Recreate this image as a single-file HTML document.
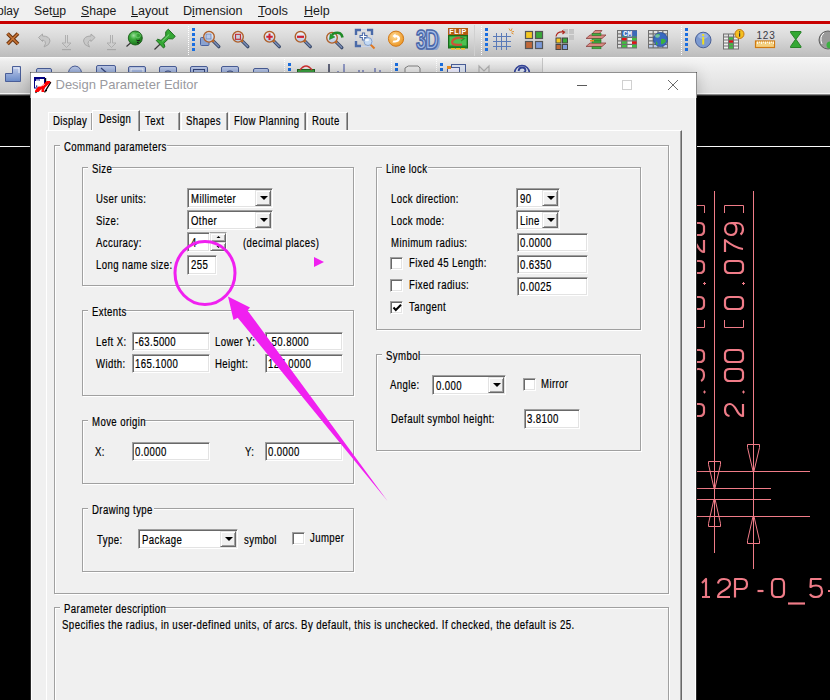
<!DOCTYPE html><html><head><meta charset="utf-8"><style>
html,body{margin:0;padding:0}
body{width:830px;height:700px;overflow:hidden;position:relative;background:#000;font-family:"Liberation Sans",sans-serif}
.a{position:absolute}
.t{position:absolute;white-space:nowrap;line-height:1}
.s{-webkit-text-stroke:0.2px currentColor}
.d{-webkit-text-stroke:0.2px #000}
.grp{position:absolute;border:1px solid #a0a0a0;box-shadow:1px 1px 0 #fff, inset 1px 1px 0 #fff;box-sizing:border-box}
.edit{position:absolute;box-sizing:border-box;background:#fff;border-top:1px solid #a0a0a0;border-left:1px solid #a0a0a0;border-right:1px solid #fff;border-bottom:1px solid #fff;box-shadow:inset 1px 1px 0 #696969, inset -1px -1px 0 #e3e3e3}
.btn{position:absolute;box-sizing:border-box;background:#f0f0f0;border-top:1px solid #e3e3e3;border-left:1px solid #e3e3e3;border-right:1px solid #696969;border-bottom:1px solid #696969;box-shadow:inset 1px 1px 0 #fff, inset -1px -1px 0 #a0a0a0}
.arr{position:absolute;left:4px;top:50%;margin-top:-2px;width:0;height:0;border-left:4px solid transparent;border-right:4px solid transparent;border-top:4px solid #000}
.chk{position:absolute;width:13px;height:13px;box-sizing:border-box;background:#fff;border-top:1px solid #a0a0a0;border-left:1px solid #a0a0a0;border-right:1px solid #fff;border-bottom:1px solid #fff;box-shadow:inset 1px 1px 0 #696969, inset -1px -1px 0 #e3e3e3}
.lbl{position:absolute;background:#f0f0f0;white-space:nowrap;line-height:1;font-size:11px;padding:0 2px 0 2px}
</style></head><body>

<div class="a" style="left:0;top:0;width:830px;height:21px;background:#f0f0f0"></div>
<div class="t" style="left:-3px;top:5px;font-size:12px;color:#1a1a1a;">play</div>
<div class="t" style="left:34px;top:5px;font-size:12px;color:#1a1a1a;transform:scaleX(1.02);transform-origin:0 0;">Set<u>u</u>p</div>
<div class="t" style="left:80.5px;top:5px;font-size:12px;color:#1a1a1a;transform:scaleX(1.02);transform-origin:0 0;"><u>S</u>hape</div>
<div class="t" style="left:130.5px;top:5px;font-size:12px;color:#1a1a1a;transform:scaleX(1.04);transform-origin:0 0;"><u>L</u>ayout</div>
<div class="t" style="left:183px;top:5px;font-size:12px;color:#1a1a1a;transform:scaleX(1.05);transform-origin:0 0;">D<u>i</u>mension</div>
<div class="t" style="left:257.5px;top:5px;font-size:12px;color:#1a1a1a;transform:scaleX(1.07);transform-origin:0 0;"><u>T</u>ools</div>
<div class="t" style="left:303.5px;top:5px;font-size:12px;color:#1a1a1a;transform:scaleX(1.04);transform-origin:0 0;"><u>H</u>elp</div>
<div class="a" style="left:0;top:21px;width:830px;height:3px;background:#c80000"></div>
<div class="a" style="left:0;top:24px;width:830px;height:33px;background:linear-gradient(#e9e9e9,#dadada 40%,#bcbcbc)"></div>
<div class="a" style="left:0;top:57px;width:830px;height:36px;background:linear-gradient(#f4f4f4,#dedede);border-top:1px solid #fafafa;box-sizing:border-box"></div>
<div class="a" style="left:542px;top:58px;width:1px;height:35px;background:#c6c6c6"></div>
<div class="a" style="left:0;top:57px;width:542px;height:36px;background:linear-gradient(#f4f4f4,#ececec 10%,#c4c4c4);border-top:1px solid #fafafa;box-sizing:border-box"></div>
<div class="a" style="left:0;top:93px;width:830px;height:1px;background:#f4f4f4"></div>
<div class="a" style="left:0;top:94px;width:830px;height:1px;background:#8a8a8a"></div>
<div class="a" style="left:0;top:95px;width:830px;height:1px;background:#303030"></div>
<svg class="a" style="left:0;top:0" width="830" height="96" viewBox="0 0 830 96">
<defs><linearGradient id="lens" x1="0" y1="0" x2="0" y2="1"><stop offset="0" stop-color="#f4f8fc"/><stop offset="1" stop-color="#b4c6e2"/></linearGradient></defs>
<path d="M7.5 33.5 L18 44 M18 33.5 L7.5 44" stroke="#6e3610" stroke-width="3.8"/>
<path d="M7.5 33.5 L18 44 M18 33.5 L7.5 44" stroke="#c87436" stroke-width="1.6"/>
<path d="M38.5 37.5 L42.5 34 L42.5 36 Q49.5 36 50 41 Q50 45 44 47 Q46.5 43 45 41.5 Q44 40 42.5 40 L42.5 41.5 Z" fill="#c8c8c8" stroke="#a8a8a8" stroke-width="1"/>
<path d="M65.5 35 L65.5 43 L62 43 L66.5 47.5 L71 43 L67.5 43 L67.5 35" fill="none" stroke="#aaaaaa" stroke-width="0.9"/>
<rect x="62" y="49" width="9" height="1.2" fill="#a8a8a8"/>
<path d="M110.5 35 L110.5 43 L107 43 L111.5 47.5 L116 43 L112.5 43 L112.5 35" fill="none" stroke="#aaaaaa" stroke-width="0.9"/>
<rect x="107" y="49" width="9" height="1.2" fill="#a8a8a8"/>
<path d="M95 37.5 L91 34 L91 36 Q84 36 83.5 41 Q83.5 45 89.5 47 Q87 43 88.5 41.5 Q89.5 40 91 40 L91 41.5 Z" fill="#c8c8c8" stroke="#a8a8a8" stroke-width="1"/>
<defs><radialGradient id="gb" cx="0.38" cy="0.32" r="0.75"><stop offset="0" stop-color="#9ee09e"/><stop offset="0.35" stop-color="#3cac3c"/><stop offset="1" stop-color="#176a17"/></radialGradient></defs>
<line x1="126.5" y1="46.5" x2="131" y2="42.5" stroke="#333" stroke-width="1.1"/>
<circle cx="135.3" cy="38" r="7" fill="url(#gb)" stroke="#1a5e1a" stroke-width="0.9"/>
<circle cx="138" cy="35.5" r="2.4" fill="none" stroke="#6ccf6c" stroke-width="0.8"/>
<path d="M136.5 40 l1.5 1 l2 -1 M137 42.3 l2 0.8" stroke="#1a1a1a" stroke-width="1"/>
<g transform="translate(154.5,49.5) rotate(-44)">
<line x1="0" y1="0" x2="9" y2="0" stroke="#3a3a3a" stroke-width="1.2"/>
<path d="M7.5 -5.2 L9.5 -5.2 L11 -2 L17.5 -2 L20.5 -5 L24 -5 L24 5 L20.5 5 L17.5 2 L11 2 L9.5 5.2 L7.5 5.2 Z" fill="#34a834" stroke="#1a661a" stroke-width="0.9" stroke-linejoin="round"/>
<line x1="11.5" y1="-0.6" x2="21" y2="-0.6" stroke="#8ede8e" stroke-width="0.9"/>
</g>
<rect x="188" y="26" width="1" height="1" fill="#fff"/>
<rect x="188" y="28" width="1" height="1" fill="#fff"/>
<rect x="188" y="30" width="1" height="1" fill="#fff"/>
<rect x="188" y="32" width="1" height="1" fill="#fff"/>
<rect x="188" y="34" width="1" height="1" fill="#fff"/>
<rect x="188" y="36" width="1" height="1" fill="#fff"/>
<rect x="188" y="38" width="1" height="1" fill="#fff"/>
<rect x="188" y="40" width="1" height="1" fill="#fff"/>
<rect x="188" y="42" width="1" height="1" fill="#fff"/>
<rect x="188" y="44" width="1" height="1" fill="#fff"/>
<rect x="188" y="46" width="1" height="1" fill="#fff"/>
<rect x="188" y="48" width="1" height="1" fill="#fff"/>
<rect x="188" y="50" width="1" height="1" fill="#fff"/>
<rect x="188" y="52" width="1" height="1" fill="#fff"/>
<rect x="188" y="54" width="1" height="1" fill="#fff"/>
<rect x="192" y="28" width="3" height="3" fill="#1a6ee0"/>
<rect x="192" y="33" width="3" height="3" fill="#1a6ee0"/>
<rect x="192" y="38" width="3" height="3" fill="#1a6ee0"/>
<rect x="192" y="43" width="3" height="3" fill="#1a6ee0"/>
<rect x="192" y="48" width="3" height="3" fill="#1a6ee0"/>
<rect x="200.5" y="37.5" width="8.5" height="8" rx="1" fill="#8aa2d0" stroke="#4a62a0" stroke-width="1"/>
<g>
<line x1="212.8" y1="40.599999999999994" x2="218.8" y2="46.599999999999994" stroke="#3a4a6a" stroke-width="3.4" stroke-linecap="round"/>
<line x1="213" y1="40.8" x2="218.5" y2="46.3" stroke="#7a8cb4" stroke-width="1.6" stroke-linecap="round"/>
<line x1="212.5" y1="40.3" x2="214" y2="41.8" stroke="#d07020" stroke-width="2.2"/>
<circle cx="209" cy="36.8" r="5.3" fill="url(#lens)" stroke="#b0602a" stroke-width="1.4"/>
<rect x="206" y="34" width="5" height="5" fill="#b8c8e8" stroke="#6a82b8" stroke-width="0.8"/></g>
<g>
<line x1="241.8" y1="40.599999999999994" x2="247.8" y2="46.599999999999994" stroke="#3a4a6a" stroke-width="3.4" stroke-linecap="round"/>
<line x1="242" y1="40.8" x2="247.5" y2="46.3" stroke="#7a8cb4" stroke-width="1.6" stroke-linecap="round"/>
<line x1="241.5" y1="40.3" x2="243" y2="41.8" stroke="#d07020" stroke-width="2.2"/>
<circle cx="238" cy="36.8" r="5.3" fill="url(#lens)" stroke="#b0602a" stroke-width="1.4"/>
<rect x="235.5" y="34.3" width="5" height="5" fill="#c8d0e0" stroke="#c03038" stroke-width="1.2"/></g>
<g>
<line x1="273.3" y1="40.599999999999994" x2="279.3" y2="46.599999999999994" stroke="#3a4a6a" stroke-width="3.4" stroke-linecap="round"/>
<line x1="273.5" y1="40.8" x2="279.0" y2="46.3" stroke="#7a8cb4" stroke-width="1.6" stroke-linecap="round"/>
<line x1="273.0" y1="40.3" x2="274.5" y2="41.8" stroke="#d07020" stroke-width="2.2"/>
<circle cx="269.5" cy="36.8" r="5.3" fill="url(#lens)" stroke="#b0602a" stroke-width="1.4"/>
<path d="M269.5 33.5 V40 M266.3 36.8 H272.7" stroke="#d02030" stroke-width="2"/></g>
<g>
<line x1="304.3" y1="40.599999999999994" x2="310.3" y2="46.599999999999994" stroke="#3a4a6a" stroke-width="3.4" stroke-linecap="round"/>
<line x1="304.5" y1="40.8" x2="310.0" y2="46.3" stroke="#7a8cb4" stroke-width="1.6" stroke-linecap="round"/>
<line x1="304.0" y1="40.3" x2="305.5" y2="41.8" stroke="#d07020" stroke-width="2.2"/>
<circle cx="300.5" cy="36.8" r="5.3" fill="url(#lens)" stroke="#b0602a" stroke-width="1.4"/>
<path d="M297 36.8 H304" stroke="#d02030" stroke-width="2.2"/></g>
<g>
<line x1="335.8" y1="41.599999999999994" x2="341.8" y2="47.599999999999994" stroke="#3a4a6a" stroke-width="3.4" stroke-linecap="round"/>
<line x1="336" y1="41.8" x2="341.5" y2="47.3" stroke="#7a8cb4" stroke-width="1.6" stroke-linecap="round"/>
<line x1="335.5" y1="41.3" x2="337" y2="42.8" stroke="#d07020" stroke-width="2.2"/>
<circle cx="332" cy="37.8" r="5.3" fill="url(#lens)" stroke="#b0602a" stroke-width="1.4"/>
<path d="M342.5 37.5 Q341.5 31.5 335 33 Q333 33.5 332 35" stroke="#1f8a26" stroke-width="2.6" fill="none"/><path d="M329.5 39.5 L330.2 34 L334.8 37 Z" fill="#22a02a" stroke="#1a7a20" stroke-width="0.6"/></g>
<rect x="355.5" y="29.5" width="17" height="17" fill="none" stroke="#c8d4ea" stroke-width="1"/>
<path d="M356 35 V30 H361 M367 30 H372 V35 M356 41 V46 H361" stroke="#4a6aa8" stroke-width="2.4" fill="none"/>
<path d="M363.5 32.5 V40.5 M359.5 36.5 H367.5" stroke="#4a6aa8" stroke-width="3.2"/><path d="M363.5 33.5 V39.5 M360.5 36.5 H366.5" stroke="#fff" stroke-width="1.2"/>
<line x1="370.5" y1="44.5" x2="374.5" y2="48.5" stroke="#e07820" stroke-width="2"/>
<circle cx="368" cy="41.5" r="4" fill="#c4daf4" stroke="#7a9ac8" stroke-width="0.9"/>
<ellipse cx="367" cy="40" rx="2" ry="1.3" fill="#fff" opacity="0.8"/>
<defs><radialGradient id="og" cx="0.4" cy="0.35" r="0.7"><stop offset="0" stop-color="#ffd890"/><stop offset="1" stop-color="#eb9420"/></radialGradient></defs>
<circle cx="396" cy="38.7" r="7.6" fill="url(#og)" stroke="#d07818" stroke-width="1"/>
<path d="M392.5 36 L395.5 33.5 L395.5 35 Q400 35 400 38.5 Q400 42 395 42.5 L392.5 42.5 L393.5 40.5 L395 40.5 Q397.5 40.5 397.5 38.5 Q397.5 37 395.5 37 L395.5 38.5 Z" fill="#fff"/>
<path d="M419 50 L437 50 Q441 46 440 38 Q439 33 436 31 L436 45 Z" fill="#7d9ad0" opacity="0.75"/>
<text x="0" y="0" font-family="Liberation Sans" font-weight="bold" font-size="28" fill="#a4bce8" stroke="#4a68a8" stroke-width="1.8" stroke-linejoin="round" transform="translate(416,48.5) scale(0.66,0.97)" letter-spacing="-1.5">3D</text>
<rect x="448" y="28" width="20" height="7" fill="#b35c12"/>
<text x="0" y="0" font-family="Liberation Sans" font-weight="bold" font-size="7.2" fill="#fff" transform="translate(449.3,34.2) scale(1,0.95)" letter-spacing="0.5">FLIP</text>
<rect x="448.5" y="35.5" width="19" height="12.5" fill="#1e8a28" stroke="#1a6a1a" stroke-width="1"/>
<rect x="449.5" y="36.5" width="17" height="9" fill="#4cc050"/>
<path d="M463.5 38.5 Q458 36.5 453.5 39.5 Q451 42 453 44 Q456 45.5 462 44.5" stroke="#d05038" stroke-width="2.2" fill="none"/>
<path d="M460 37 L464.5 38.5 L461 41" stroke="#2a9a2a" stroke-width="1.2" fill="none"/>
<rect x="451" y="48" width="4" height="1.6" fill="#f0c020"/>
<rect x="456" y="48" width="4" height="1.6" fill="#f0c020"/>
<rect x="461" y="48" width="4" height="1.6" fill="#f0c020"/>
<rect x="474" y="25" width="1" height="31" fill="#d0d0d0"/>
<rect x="481" y="26" width="1" height="1" fill="#fff"/>
<rect x="481" y="28" width="1" height="1" fill="#fff"/>
<rect x="481" y="30" width="1" height="1" fill="#fff"/>
<rect x="481" y="32" width="1" height="1" fill="#fff"/>
<rect x="481" y="34" width="1" height="1" fill="#fff"/>
<rect x="481" y="36" width="1" height="1" fill="#fff"/>
<rect x="481" y="38" width="1" height="1" fill="#fff"/>
<rect x="481" y="40" width="1" height="1" fill="#fff"/>
<rect x="481" y="42" width="1" height="1" fill="#fff"/>
<rect x="481" y="44" width="1" height="1" fill="#fff"/>
<rect x="481" y="46" width="1" height="1" fill="#fff"/>
<rect x="481" y="48" width="1" height="1" fill="#fff"/>
<rect x="481" y="50" width="1" height="1" fill="#fff"/>
<rect x="481" y="52" width="1" height="1" fill="#fff"/>
<rect x="481" y="54" width="1" height="1" fill="#fff"/>
<rect x="485" y="28" width="3" height="3" fill="#1a6ee0"/>
<rect x="485" y="33" width="3" height="3" fill="#1a6ee0"/>
<rect x="485" y="38" width="3" height="3" fill="#1a6ee0"/>
<rect x="485" y="43" width="3" height="3" fill="#1a6ee0"/>
<rect x="485" y="48" width="3" height="3" fill="#1a6ee0"/>
<line x1="496.5" y1="33" x2="496.5" y2="50" stroke="#5a7ab8" stroke-width="1"/>
<line x1="501.5" y1="33" x2="501.5" y2="50" stroke="#5a7ab8" stroke-width="1"/>
<line x1="506.5" y1="33" x2="506.5" y2="50" stroke="#5a7ab8" stroke-width="1"/>
<line x1="493" y1="36.5" x2="511" y2="36.5" stroke="#5a7ab8" stroke-width="1"/>
<line x1="493" y1="41.5" x2="511" y2="41.5" stroke="#5a7ab8" stroke-width="1"/>
<line x1="493" y1="46.5" x2="511" y2="46.5" stroke="#5a7ab8" stroke-width="1"/>
<path d="M509 28.5 L510.5 31 M512 28.5 L511 31 M514 31.5 L511.5 32 M513.5 34 L511.5 33" stroke="#e08a20" stroke-width="0.9"/>
<rect x="525.5" y="31.5" width="7" height="7" fill="#f4c820" stroke="#555" stroke-width="1.2"/>
<rect x="535.5" y="31.5" width="7" height="7" fill="#3aa83a" stroke="#555" stroke-width="1.2"/>
<rect x="525.5" y="41.5" width="7" height="7" fill="#c06838" stroke="#555" stroke-width="1.2"/>
<rect x="535.5" y="41.5" width="7" height="7" fill="#7a9ad8" stroke="#555" stroke-width="1.2"/>
<rect x="563" y="29" width="5" height="5" fill="#c4c4c4"/>
<rect x="569" y="29" width="5" height="5" fill="#c4c4c4"/>
<rect x="569" y="35" width="5" height="5" fill="#c4c4c4"/>
<rect x="556" y="38" width="5" height="5" fill="#f4c820" stroke="#444" stroke-width="1"/>
<rect x="562.5" y="38" width="5" height="5" fill="#3aa83a" stroke="#444" stroke-width="1"/>
<rect x="556" y="44.5" width="5" height="5" fill="#c06838" stroke="#444" stroke-width="1"/>
<rect x="562.5" y="44.5" width="5" height="5" fill="#7a9ad8" stroke="#444" stroke-width="1"/>
<path d="M556 36.5 Q557 31 564 32 M562 30.5 L564.5 32 L562.5 34" stroke="#b02a20" stroke-width="1.2" fill="none"/>
<path d="M595 30.5 L602 30.5 L599 34 L592 34 Z" fill="#d88a80" stroke="#8a4040" stroke-width="0.8"/>
<path d="M590 35 L606 35 L602 38.5 L586 38.5 Z" fill="#d88a80" stroke="#8a4040" stroke-width="0.8"/>
<path d="M590 43 L606 43 L602 46.5 L586 46.5 Z" fill="#d88a80" stroke="#8a4040" stroke-width="0.8"/>
<rect x="592" y="33.5" width="9" height="2" fill="#44b044" stroke="#1e6a1e" stroke-width="0.5"/>
<rect x="592" y="38.8" width="9" height="2" fill="#44b044" stroke="#1e6a1e" stroke-width="0.5"/>
<rect x="592" y="41" width="9" height="2" fill="#44b044" stroke="#1e6a1e" stroke-width="0.5"/>
<rect x="592" y="46.8" width="9" height="2" fill="#44b044" stroke="#1e6a1e" stroke-width="0.5"/>
<rect x="590" y="40" width="4" height="1.5" fill="#f09020"/>
<rect x="617" y="30" width="20" height="18.5" fill="#707070"/>
<rect x="618" y="31.0" width="3" height="2.3" fill="#ddd"/>
<rect x="618" y="34.5" width="3" height="2.3" fill="#ddd"/>
<rect x="622" y="34.5" width="4.5" height="2.3" fill="#3ec03e"/>
<rect x="627.5" y="34.5" width="4.5" height="2.3" fill="#eee"/>
<rect x="632" y="34.5" width="4.5" height="2.3" fill="#3ec03e"/>
<rect x="618" y="38.0" width="3" height="2.3" fill="#ddd"/>
<rect x="622" y="38.0" width="4.5" height="2.3" fill="#e81010"/>
<rect x="627.5" y="38.0" width="4.5" height="2.3" fill="#eee"/>
<rect x="632" y="38.0" width="4.5" height="2.3" fill="#3ec03e"/>
<rect x="618" y="41.5" width="3" height="2.3" fill="#ddd"/>
<rect x="622" y="41.5" width="4.5" height="2.3" fill="#3ec03e"/>
<rect x="627.5" y="41.5" width="4.5" height="2.3" fill="#eee"/>
<rect x="632" y="41.5" width="4.5" height="2.3" fill="#e81010"/>
<rect x="618" y="45.0" width="3" height="2.3" fill="#ddd"/>
<rect x="622" y="45.0" width="4.5" height="2.3" fill="#3ec03e"/>
<rect x="627.5" y="45.0" width="4.5" height="2.3" fill="#eee"/>
<rect x="632" y="45.0" width="4.5" height="2.3" fill="#3ec03e"/>
<rect x="622" y="30.5" width="15" height="6" fill="#3a6ab8"/>
<text x="623" y="36.2" font-family="Liberation Mono" font-weight="bold" font-size="7.5" fill="#fff">CM</text>
<rect x="648" y="30" width="20" height="18.5" fill="#707070"/>
<rect x="649.0" y="31.0" width="3.6" height="2.3" fill="#e0e0e0"/>
<rect x="653.8" y="31.0" width="3.6" height="2.3" fill="#e0e0e0"/>
<rect x="658.6" y="31.0" width="3.6" height="2.3" fill="#e0e0e0"/>
<rect x="663.4" y="31.0" width="3.6" height="2.3" fill="#e0e0e0"/>
<rect x="649.0" y="34.5" width="3.6" height="2.3" fill="#e0e0e0"/>
<rect x="653.8" y="34.5" width="3.6" height="2.3" fill="#e0e0e0"/>
<rect x="658.6" y="34.5" width="3.6" height="2.3" fill="#e0e0e0"/>
<rect x="663.4" y="34.5" width="3.6" height="2.3" fill="#e0e0e0"/>
<rect x="649.0" y="38.0" width="3.6" height="2.3" fill="#e0e0e0"/>
<rect x="653.8" y="38.0" width="3.6" height="2.3" fill="#e0e0e0"/>
<rect x="658.6" y="38.0" width="3.6" height="2.3" fill="#e0e0e0"/>
<rect x="663.4" y="38.0" width="3.6" height="2.3" fill="#e0e0e0"/>
<rect x="649.0" y="41.5" width="3.6" height="2.3" fill="#e0e0e0"/>
<rect x="653.8" y="41.5" width="3.6" height="2.3" fill="#e0e0e0"/>
<rect x="658.6" y="41.5" width="3.6" height="2.3" fill="#e0e0e0"/>
<rect x="663.4" y="41.5" width="3.6" height="2.3" fill="#e0e0e0"/>
<rect x="649.0" y="45.0" width="3.6" height="2.3" fill="#b8c8e8"/>
<rect x="653.8" y="45.0" width="3.6" height="2.3" fill="#b8c8e8"/>
<rect x="658.6" y="45.0" width="3.6" height="2.3" fill="#b8c8e8"/>
<rect x="663.4" y="45.0" width="3.6" height="2.3" fill="#b8c8e8"/>
<circle cx="660.5" cy="39.5" r="7" fill="#3a6ac0" stroke="#2a4a90" stroke-width="0.8"/>
<path d="M655 36 Q657 33 660 34 L659 37 Q656 39 655 36 Z M661 39 Q665 38 666 41 Q664 45 661 44 Z M656 41 L658 44 L656 45 Z" fill="#3ab040"/>
<ellipse cx="657.5" cy="36" rx="2.5" ry="1.8" fill="#b0d0ff" opacity="0.5"/>
<rect x="681" y="26" width="1" height="1" fill="#fff"/>
<rect x="681" y="28" width="1" height="1" fill="#fff"/>
<rect x="681" y="30" width="1" height="1" fill="#fff"/>
<rect x="681" y="32" width="1" height="1" fill="#fff"/>
<rect x="681" y="34" width="1" height="1" fill="#fff"/>
<rect x="681" y="36" width="1" height="1" fill="#fff"/>
<rect x="681" y="38" width="1" height="1" fill="#fff"/>
<rect x="681" y="40" width="1" height="1" fill="#fff"/>
<rect x="681" y="42" width="1" height="1" fill="#fff"/>
<rect x="681" y="44" width="1" height="1" fill="#fff"/>
<rect x="681" y="46" width="1" height="1" fill="#fff"/>
<rect x="681" y="48" width="1" height="1" fill="#fff"/>
<rect x="681" y="50" width="1" height="1" fill="#fff"/>
<rect x="681" y="52" width="1" height="1" fill="#fff"/>
<rect x="681" y="54" width="1" height="1" fill="#fff"/>
<rect x="685" y="28" width="3" height="3" fill="#1a6ee0"/>
<rect x="685" y="33" width="3" height="3" fill="#1a6ee0"/>
<rect x="685" y="38" width="3" height="3" fill="#1a6ee0"/>
<rect x="685" y="43" width="3" height="3" fill="#1a6ee0"/>
<rect x="685" y="48" width="3" height="3" fill="#1a6ee0"/>
<circle cx="703.2" cy="40" r="7.8" fill="#7c9ad0" stroke="#4a6096" stroke-width="1"/>
<ellipse cx="703" cy="36" rx="5" ry="3" fill="#b0c4ea" opacity="0.6"/>
<rect x="702.2" y="34" width="2" height="2" fill="#f2e020"/><rect x="702.2" y="37" width="2" height="7.5" fill="#f2e020"/>
<rect x="723" y="33.5" width="16" height="16" fill="#707070"/>
<rect x="724" y="34.5" width="4" height="2" fill="#ddd"/>
<rect x="729" y="34.5" width="4" height="2" fill="#ddd"/>
<rect x="734" y="34.5" width="4" height="2" fill="#ddd"/>
<rect x="724" y="37.5" width="4" height="2" fill="#eee"/>
<rect x="729" y="37.5" width="4" height="2" fill="#3ec03e"/>
<rect x="734" y="37.5" width="4" height="2" fill="#eee"/>
<rect x="724" y="40.5" width="4" height="2" fill="#eee"/>
<rect x="729" y="40.5" width="4" height="2" fill="#e81010"/>
<rect x="734" y="40.5" width="4" height="2" fill="#eee"/>
<rect x="724" y="43.5" width="4" height="2" fill="#eee"/>
<rect x="729" y="43.5" width="4" height="2" fill="#3ec03e"/>
<rect x="734" y="43.5" width="4" height="2" fill="#eee"/>
<rect x="724" y="46.5" width="4" height="2" fill="#eee"/>
<rect x="729" y="46.5" width="4" height="2" fill="#3ec03e"/>
<rect x="734" y="46.5" width="4" height="2" fill="#eee"/>
<circle cx="739.5" cy="34" r="4.5" fill="#f4c020" stroke="#c87810" stroke-width="1"/>
<rect x="739" y="31.3" width="1.2" height="1.2" fill="#333"/><rect x="739" y="33.2" width="1.2" height="3.5" fill="#333"/>
<text x="756.5" y="38.8" font-family="Liberation Sans" font-size="10" fill="#383844" letter-spacing="0.8">123</text>
<rect x="755.5" y="41" width="19" height="6.5" fill="#f4d080" stroke="#d07a10" stroke-width="1.2"/>
<line x1="757.5" y1="41.5" x2="757.5" y2="44" stroke="#fff" stroke-width="0.8"/>
<line x1="759.5" y1="41.5" x2="759.5" y2="43" stroke="#fff" stroke-width="0.8"/>
<line x1="761.5" y1="41.5" x2="761.5" y2="44" stroke="#fff" stroke-width="0.8"/>
<line x1="763.5" y1="41.5" x2="763.5" y2="43" stroke="#fff" stroke-width="0.8"/>
<line x1="765.5" y1="41.5" x2="765.5" y2="44" stroke="#fff" stroke-width="0.8"/>
<line x1="767.5" y1="41.5" x2="767.5" y2="43" stroke="#fff" stroke-width="0.8"/>
<line x1="769.5" y1="41.5" x2="769.5" y2="44" stroke="#fff" stroke-width="0.8"/>
<line x1="771.5" y1="41.5" x2="771.5" y2="43" stroke="#fff" stroke-width="0.8"/>
<line x1="773.5" y1="41.5" x2="773.5" y2="44" stroke="#fff" stroke-width="0.8"/>
<path d="M790.5 31.5 L801 31.5 L801 32.5 L796 39.3 L801 46.5 L801 47.5 L790.5 47.5 L790.5 46.5 L795.5 39.3 L790.5 32.5 Z" fill="#34a834" stroke="#1e7a1e" stroke-width="0.9"/>
<circle cx="828" cy="40" r="9" fill="#9a9a9a" stroke="#606060" stroke-width="1"/>
<path d="M822 44 Q819 37 824 33" stroke="#fff" stroke-width="1" fill="none"/>
<circle cx="830" cy="45" r="3.5" fill="#3ab040"/>
<defs><linearGradient id="bg" x1="0" y1="0" x2="0" y2="1"><stop offset="0" stop-color="#c0ccea"/><stop offset="1" stop-color="#6a8ac8"/></linearGradient></defs>
<path d="M5.5 73.5 H12.5 V66.5 H20.5 V81.5 H5.5 Z" fill="url(#bg)" stroke="#4a5e98" stroke-width="1"/>
<path d="M13.5 68 H19 V73" stroke="#fff" stroke-width="0.8" fill="none"/>
<rect x="36.5" y="68.5" width="15" height="12" rx="1.5" fill="url(#bg)" stroke="#4a5e98" stroke-width="1"/>
<path d="M67.5 80 Q67.5 66 75 66 Q82.5 66 82.5 80 Z" fill="url(#bg)" stroke="#4a5e98" stroke-width="1"/>
<rect x="96.5" y="65.5" width="19" height="15" rx="1.5" fill="url(#bg)" stroke="#4a5e98" stroke-width="1"/><path d="M101 68 L108 74" stroke="#34447a" stroke-width="1.2"/>
<rect x="128.5" y="66.5" width="17" height="14" rx="1.5" fill="url(#bg)" stroke="#4a5e98" stroke-width="1"/><rect x="131" y="69" width="12" height="10" fill="none" stroke="#fff" stroke-width="0.8"/>
<rect x="159.5" y="66.5" width="17" height="14" rx="1.5" fill="url(#bg)" stroke="#4a5e98" stroke-width="1"/><circle cx="168" cy="76" r="5" fill="none" stroke="#34447a" stroke-width="1"/>
<rect x="190.5" y="66.5" width="17" height="14" rx="1.5" fill="url(#bg)" stroke="#4a5e98" stroke-width="1"/><rect x="193.5" y="69.5" width="11" height="10" fill="none" stroke="#34447a" stroke-width="1"/>
<rect x="221.5" y="66.5" width="17" height="14" rx="1.5" fill="url(#bg)" stroke="#4a5e98" stroke-width="1"/><circle cx="230" cy="76" r="5" fill="none" stroke="#34447a" stroke-width="1"/>
<rect x="253.5" y="68.5" width="15" height="12" rx="1.5" fill="url(#bg)" stroke="#4a5e98" stroke-width="1"/>
<rect x="284" y="59" width="1" height="1" fill="#fff"/>
<rect x="284" y="61" width="1" height="1" fill="#fff"/>
<rect x="284" y="63" width="1" height="1" fill="#fff"/>
<rect x="284" y="65" width="1" height="1" fill="#fff"/>
<rect x="284" y="67" width="1" height="1" fill="#fff"/>
<rect x="284" y="69" width="1" height="1" fill="#fff"/>
<rect x="284" y="71" width="1" height="1" fill="#fff"/>
<rect x="284" y="73" width="1" height="1" fill="#fff"/>
<rect x="284" y="75" width="1" height="1" fill="#fff"/>
<rect x="284" y="77" width="1" height="1" fill="#fff"/>
<rect x="284" y="79" width="1" height="1" fill="#fff"/>
<rect x="284" y="81" width="1" height="1" fill="#fff"/>
<rect x="284" y="83" width="1" height="1" fill="#fff"/>
<rect x="284" y="85" width="1" height="1" fill="#fff"/>
<rect x="284" y="87" width="1" height="1" fill="#fff"/>
<rect x="284" y="89" width="1" height="1" fill="#fff"/>
<rect x="284" y="91" width="1" height="1" fill="#fff"/>
<rect x="288" y="63" width="3" height="3" fill="#1a6ee0"/>
<rect x="288" y="68" width="3" height="3" fill="#1a6ee0"/>
<rect x="297.5" y="69.5" width="17" height="6" fill="#3aa040" stroke="#206820" stroke-width="1"/>
<path d="M300 70 Q306 62 312 70" stroke="#d03030" stroke-width="1.5" fill="none"/>
<path d="M329 64 V73 M344 64 V73 M338 71 V73 M359 70 V73 M363 70 V73 M375 68 V73 M380 70 V73" stroke="#3a4aa0" stroke-width="1"/>
<path d="M329 64 V73" stroke="#333" stroke-width="1"/>
<rect x="391" y="59" width="1" height="1" fill="#fff"/>
<rect x="391" y="61" width="1" height="1" fill="#fff"/>
<rect x="391" y="63" width="1" height="1" fill="#fff"/>
<rect x="391" y="65" width="1" height="1" fill="#fff"/>
<rect x="391" y="67" width="1" height="1" fill="#fff"/>
<rect x="391" y="69" width="1" height="1" fill="#fff"/>
<rect x="391" y="71" width="1" height="1" fill="#fff"/>
<rect x="391" y="73" width="1" height="1" fill="#fff"/>
<rect x="391" y="75" width="1" height="1" fill="#fff"/>
<rect x="391" y="77" width="1" height="1" fill="#fff"/>
<rect x="391" y="79" width="1" height="1" fill="#fff"/>
<rect x="391" y="81" width="1" height="1" fill="#fff"/>
<rect x="391" y="83" width="1" height="1" fill="#fff"/>
<rect x="391" y="85" width="1" height="1" fill="#fff"/>
<rect x="391" y="87" width="1" height="1" fill="#fff"/>
<rect x="391" y="89" width="1" height="1" fill="#fff"/>
<rect x="391" y="91" width="1" height="1" fill="#fff"/>
<rect x="395" y="63" width="3" height="3" fill="#1a6ee0"/>
<rect x="395" y="68" width="3" height="3" fill="#1a6ee0"/>
<path d="M405 73 L405 68 Q408 65 412 66 L418 66 L420 68 L420 73 Z" fill="#e8e8e8" stroke="#808080" stroke-width="1"/>
<rect x="436" y="59" width="1" height="1" fill="#fff"/>
<rect x="436" y="61" width="1" height="1" fill="#fff"/>
<rect x="436" y="63" width="1" height="1" fill="#fff"/>
<rect x="436" y="65" width="1" height="1" fill="#fff"/>
<rect x="436" y="67" width="1" height="1" fill="#fff"/>
<rect x="436" y="69" width="1" height="1" fill="#fff"/>
<rect x="436" y="71" width="1" height="1" fill="#fff"/>
<rect x="436" y="73" width="1" height="1" fill="#fff"/>
<rect x="436" y="75" width="1" height="1" fill="#fff"/>
<rect x="436" y="77" width="1" height="1" fill="#fff"/>
<rect x="436" y="79" width="1" height="1" fill="#fff"/>
<rect x="436" y="81" width="1" height="1" fill="#fff"/>
<rect x="436" y="83" width="1" height="1" fill="#fff"/>
<rect x="436" y="85" width="1" height="1" fill="#fff"/>
<rect x="436" y="87" width="1" height="1" fill="#fff"/>
<rect x="436" y="89" width="1" height="1" fill="#fff"/>
<rect x="436" y="91" width="1" height="1" fill="#fff"/>
<rect x="440" y="63" width="3" height="3" fill="#1a6ee0"/>
<rect x="440" y="68" width="3" height="3" fill="#1a6ee0"/>
<rect x="451.5" y="64.5" width="14" height="9" fill="#dde4f2" stroke="#4a5e98" stroke-width="1"/>
<rect x="447.5" y="67.5" width="12" height="6" fill="#eef" stroke="#4a5e98" stroke-width="1"/>
<rect x="447" y="66" width="4" height="3" fill="#f09020"/>
<path d="M479 66 L484 71 L489 66 V73 H479 Z" fill="none" stroke="#b0b0b0" stroke-width="1.2"/>
<circle cx="522" cy="73" r="7.5" fill="#dfe6f4" stroke="#34449a" stroke-width="1.6"/>
<path d="M518.5 71 Q519 67.5 522 67.5 Q525.5 67.5 525.5 70.5 Q525.5 72 523 73" fill="none" stroke="#34449a" stroke-width="1.8"/>
</svg>
<div class="a" style="left:0;top:96px;width:830px;height:604px;background:#000"></div>
<div class="a" style="left:0;top:146px;width:830px;height:1px;background:#fafafa"></div>
<svg class="a" style="left:0;top:0" width="830" height="700" viewBox="0 0 830 700">
<line x1="714.5" y1="191" x2="714.5" y2="553" stroke="#f07c88" stroke-width="1"/>
<line x1="753.5" y1="191" x2="753.5" y2="569" stroke="#f07c88" stroke-width="1"/>
<line x1="696" y1="471.5" x2="810" y2="471.5" stroke="#f07c88" stroke-width="1"/>
<line x1="696" y1="516.5" x2="810" y2="516.5" stroke="#f07c88" stroke-width="1"/>
<line x1="696" y1="488.5" x2="771" y2="488.5" stroke="#f07c88" stroke-width="1"/>
<line x1="696" y1="499.5" x2="771" y2="499.5" stroke="#f07c88" stroke-width="1"/>
<path d="M708.5 461.5 H720.5 V464.5 L715.0 488 L714.0 488 L708.5 464.5 Z" fill="none" stroke="#f07c88" stroke-width="1"/>
<path d="M708.5 526.5 H720.5 V523.5 L715.0 499 L714.0 499 L708.5 523.5 Z" fill="none" stroke="#f07c88" stroke-width="1"/>
<path d="M747.5 444.5 H759.5 V447.5 L754.0 471 L753.0 471 L747.5 447.5 Z" fill="none" stroke="#f07c88" stroke-width="1"/>
<path d="M747.5 543.5 H759.5 V540.5 L754.0 516.5 L753.0 516.5 L747.5 540.5 Z" fill="none" stroke="#f07c88" stroke-width="1"/>
<path transform="translate(724,417) rotate(-90)" d="M1,5.5 C1.5,2.5 3.5,1 7,1 C10.5,1 13,2.5 13,6 C13,9 10.5,10.5 7,12.5 C3,14.5 1,16 1,19 H13" fill="none" stroke="#f07c88" stroke-width="2.2" stroke-linejoin="round"/>
<path transform="translate(724,393.5) rotate(-90)" d="M0,19.5 H3 M1.5,18 V21" fill="none" stroke="#f07c88" stroke-width="1" stroke-linejoin="round"/>
<path transform="translate(724,382) rotate(-90)" d="M4.5,1 H9.5 Q13,1.5 13,5.5 V14.5 Q13,18.5 9.5,19 H4.5 Q1,18.5 1,14.5 V5.5 Q1,1.5 4.5,1 Z" fill="none" stroke="#f07c88" stroke-width="2.2" stroke-linejoin="round"/>
<path transform="translate(724,363) rotate(-90)" d="M4.5,1 H9.5 Q13,1.5 13,5.5 V14.5 Q13,18.5 9.5,19 H4.5 Q1,18.5 1,14.5 V5.5 Q1,1.5 4.5,1 Z" fill="none" stroke="#f07c88" stroke-width="2.2" stroke-linejoin="round"/>
<path transform="translate(724,328) rotate(-90)" d="M8,0.5 H0.5 V19.5 H8" fill="none" stroke="#f07c88" stroke-width="1" stroke-linejoin="round"/>
<path transform="translate(724,310) rotate(-90)" d="M4.5,1 H9.5 Q13,1.5 13,5.5 V14.5 Q13,18.5 9.5,19 H4.5 Q1,18.5 1,14.5 V5.5 Q1,1.5 4.5,1 Z" fill="none" stroke="#f07c88" stroke-width="2.2" stroke-linejoin="round"/>
<path transform="translate(724,285) rotate(-90)" d="M0,19.5 H3 M1.5,18 V21" fill="none" stroke="#f07c88" stroke-width="1" stroke-linejoin="round"/>
<path transform="translate(724,274) rotate(-90)" d="M4.5,1 H9.5 Q13,1.5 13,5.5 V14.5 Q13,18.5 9.5,19 H4.5 Q1,18.5 1,14.5 V5.5 Q1,1.5 4.5,1 Z" fill="none" stroke="#f07c88" stroke-width="2.2" stroke-linejoin="round"/>
<path transform="translate(724,253) rotate(-90)" d="M1,1 H13 C9,6 5,12 4,19" fill="none" stroke="#f07c88" stroke-width="2.2" stroke-linejoin="round"/>
<path transform="translate(724,236) rotate(-90)" d="M13,7.5 C12.5,11 10,12.5 7,12.5 C3.5,12.5 1,10.5 1,7 C1,3.5 3.5,1 7,1 C10.5,1 13,3.5 13,7.5 V12.5 C13,16.5 10.5,19 7,19 C4.5,19 2.5,18 1.5,16.5" fill="none" stroke="#f07c88" stroke-width="2.2" stroke-linejoin="round"/>
<path transform="translate(724,213) rotate(-90)" d="M0,0.5 H7.5 V19.5 H0" fill="none" stroke="#f07c88" stroke-width="1" stroke-linejoin="round"/>
<path transform="translate(685,417) rotate(-90)" d="M4.5,1 H9.5 Q13,1.5 13,5.5 V14.5 Q13,18.5 9.5,19 H4.5 Q1,18.5 1,14.5 V5.5 Q1,1.5 4.5,1 Z" fill="none" stroke="#f07c88" stroke-width="2.2" stroke-linejoin="round"/>
<path transform="translate(685,393.5) rotate(-90)" d="M0,19.5 H3 M1.5,18 V21" fill="none" stroke="#f07c88" stroke-width="1" stroke-linejoin="round"/>
<path transform="translate(685,382) rotate(-90)" d="M12.5,1 H2 L1.5,9 C3,8 5,7.5 7,7.5 C11,7.5 13,10 13,13.5 C13,17 10.5,19 7,19 C4,19 2,18 1,16" fill="none" stroke="#f07c88" stroke-width="2.2" stroke-linejoin="round"/>
<path transform="translate(685,363) rotate(-90)" d="M4.5,1 H9.5 Q13,1.5 13,5.5 V14.5 Q13,18.5 9.5,19 H4.5 Q1,18.5 1,14.5 V5.5 Q1,1.5 4.5,1 Z" fill="none" stroke="#f07c88" stroke-width="2.2" stroke-linejoin="round"/>
<path transform="translate(685,328) rotate(-90)" d="M8,0.5 H0.5 V19.5 H8" fill="none" stroke="#f07c88" stroke-width="1" stroke-linejoin="round"/>
<path transform="translate(685,310) rotate(-90)" d="M4.5,1 H9.5 Q13,1.5 13,5.5 V14.5 Q13,18.5 9.5,19 H4.5 Q1,18.5 1,14.5 V5.5 Q1,1.5 4.5,1 Z" fill="none" stroke="#f07c88" stroke-width="2.2" stroke-linejoin="round"/>
<path transform="translate(685,285) rotate(-90)" d="M0,19.5 H3 M1.5,18 V21" fill="none" stroke="#f07c88" stroke-width="1" stroke-linejoin="round"/>
<path transform="translate(685,274) rotate(-90)" d="M4.5,1 H9.5 Q13,1.5 13,5.5 V14.5 Q13,18.5 9.5,19 H4.5 Q1,18.5 1,14.5 V5.5 Q1,1.5 4.5,1 Z" fill="none" stroke="#f07c88" stroke-width="2.2" stroke-linejoin="round"/>
<path transform="translate(685,253) rotate(-90)" d="M1,5.5 C1.5,2.5 3.5,1 7,1 C10.5,1 13,2.5 13,6 C13,9 10.5,10.5 7,12.5 C3,14.5 1,16 1,19 H13" fill="none" stroke="#f07c88" stroke-width="2.2" stroke-linejoin="round"/>
<path transform="translate(685,236) rotate(-90)" d="M4.5,1 H9.5 Q13,1.5 13,5.5 V14.5 Q13,18.5 9.5,19 H4.5 Q1,18.5 1,14.5 V5.5 Q1,1.5 4.5,1 Z" fill="none" stroke="#f07c88" stroke-width="2.2" stroke-linejoin="round"/>
<path transform="translate(685,213) rotate(-90)" d="M0,0.5 H7.5 V19.5 H0" fill="none" stroke="#f07c88" stroke-width="1" stroke-linejoin="round"/>
<path transform="translate(701.5,578)" d="M0.5,5 L4.5,1 V19 M0.5,19 H8.5" fill="none" stroke="#f07c88" stroke-width="2.2" stroke-linejoin="round"/>
<path transform="translate(717,578)" d="M1,5.5 C1.5,2.5 3.5,1 7,1 C10.5,1 13,2.5 13,6 C13,9 10.5,10.5 7,12.5 C3,14.5 1,16 1,19 H13" fill="none" stroke="#f07c88" stroke-width="2.2" stroke-linejoin="round"/>
<path transform="translate(734,578)" d="M1,19.5 V1 H8 C11.5,1 13,3 13,6 C13,9.5 11.5,11 8,11 H1" fill="none" stroke="#f07c88" stroke-width="2.2" stroke-linejoin="round"/>
<path transform="translate(756.5,578)" d="M1,13 H7" fill="none" stroke="#f07c88" stroke-width="2.2" stroke-linejoin="round"/>
<path transform="translate(771,578)" d="M4.5,1 H9.5 Q13,1.5 13,5.5 V14.5 Q13,18.5 9.5,19 H4.5 Q1,18.5 1,14.5 V5.5 Q1,1.5 4.5,1 Z" fill="none" stroke="#f07c88" stroke-width="2.2" stroke-linejoin="round"/>
<path transform="translate(788,578)" d="M0,25.5 H17" fill="none" stroke="#f07c88" stroke-width="2.2" stroke-linejoin="round"/>
<path transform="translate(809,578)" d="M12.5,1 H2 L1.5,9 C3,8 5,7.5 7,7.5 C11,7.5 13,10 13,13.5 C13,17 10.5,19 7,19 C4,19 2,18 1,16" fill="none" stroke="#f07c88" stroke-width="2.2" stroke-linejoin="round"/>
<path transform="translate(827,578)" d="M1,13 H7" fill="none" stroke="#f07c88" stroke-width="2.2" stroke-linejoin="round"/>
</svg>
<div class="a" style="left:30px;top:72px;width:667px;height:640px;background:#f0f0f0;border-left:1px solid #2a2a2a;border-top:1px solid #909090;border-right:1px solid #2a2a2a;box-sizing:border-box;box-shadow:0 2px 14px rgba(0,0,0,0.22), inset -1px 0 0 #fff, inset 1px 0 0 #fff"></div>
<div class="a" style="left:30px;top:73px;width:667px;height:25px;background:#fff;border-right:1px solid #909090;border-left:1px solid #909090;box-sizing:border-box"></div>
<div class="t" style="left:55.5px;top:78px;font-size:13px;color:#9a9aa0;">Design Parameter Editor</div>
<svg class="a" style="left:32px;top:75px" width="20" height="20" viewBox="32 75 20 20">
<rect x="34" y="77" width="11" height="11.5" fill="#000080"/>
<rect x="35" y="81" width="9" height="6.5" fill="#fff"/>
<rect x="36" y="79.5" width="3" height="1.2" fill="#fff"/>
<rect x="39.5" y="79" width="4.5" height="2" fill="#fff"/>
<rect x="45" y="78" width="1.2" height="5" fill="#000"/>
<rect x="36" y="85.5" width="1.3" height="1.3" fill="#000080"/>
<path d="M35.5 92.8 L40.2 88.2 M44.5 92.3 L50.8 82.2 M45 90.6 H47" stroke="#000" stroke-width="1.3"/>
<polygon points="35,90.5 38.5,86.5 42.5,86.5 42.5,88 38.5,92 35,92" fill="#ff0000"/>
<polygon points="41.5,86 46.8,81 50.2,81 50.2,82.5 44.2,88.5 44.2,92 41.5,92" fill="#ff0000"/>
<path d="M42.5 86 L44.5 84" stroke="#fff" stroke-width="1"/>
</svg>
<div class="a" style="left:577px;top:85px;width:10px;height:1px;background:#5a5a5a"></div>
<div class="a" style="left:622px;top:80px;width:10px;height:10px;border:1px solid #d0d0d0;box-sizing:border-box"></div>
<svg class="a" style="left:667px;top:79px" width="12" height="12"><path d="M1 1 L11 11 M11 1 L1 11" stroke="#6a6a6a" stroke-width="1"/></svg>
<div class="a" style="left:46px;top:130px;width:636px;height:570px;box-sizing:border-box;border-left:1px solid #fff;border-top:1px solid #fff;border-right:1px solid #696969;box-shadow:inset -1px 0 0 #a0a0a0"></div>
<div class="a" style="left:48px;top:112px;width:45px;height:18px;background:#f0f0f0;box-sizing:border-box;border-left:1px solid #fff;border-top:1px solid #fff;border-right:1px solid #696969;box-shadow:inset -1px 0 0 #a0a0a0"></div>
<div class="t s" style="left:53px;top:115px;font-size:12px;color:#000;transform:scaleX(0.8);transform-origin:0 0;letter-spacing:0.5px;">Display</div>
<div class="a" style="left:139px;top:112px;width:41px;height:18px;background:#f0f0f0;box-sizing:border-box;border-left:1px solid #fff;border-top:1px solid #fff;border-right:1px solid #696969;box-shadow:inset -1px 0 0 #a0a0a0"></div>
<div class="t s" style="left:145px;top:115px;font-size:12px;color:#000;transform:scaleX(0.8);transform-origin:0 0;letter-spacing:0.5px;">Text</div>
<div class="a" style="left:181px;top:112px;width:47px;height:18px;background:#f0f0f0;box-sizing:border-box;border-left:1px solid #fff;border-top:1px solid #fff;border-right:1px solid #696969;box-shadow:inset -1px 0 0 #a0a0a0"></div>
<div class="t s" style="left:186px;top:115px;font-size:12px;color:#000;transform:scaleX(0.8);transform-origin:0 0;letter-spacing:0.5px;">Shapes</div>
<div class="a" style="left:229px;top:112px;width:77px;height:18px;background:#f0f0f0;box-sizing:border-box;border-left:1px solid #fff;border-top:1px solid #fff;border-right:1px solid #696969;box-shadow:inset -1px 0 0 #a0a0a0"></div>
<div class="t s" style="left:234px;top:115px;font-size:12px;color:#000;transform:scaleX(0.8);transform-origin:0 0;letter-spacing:0.5px;">Flow Planning</div>
<div class="a" style="left:307px;top:112px;width:41px;height:18px;background:#f0f0f0;box-sizing:border-box;border-left:1px solid #fff;border-top:1px solid #fff;border-right:1px solid #696969;box-shadow:inset -1px 0 0 #a0a0a0"></div>
<div class="t s" style="left:312px;top:115px;font-size:12px;color:#000;transform:scaleX(0.8);transform-origin:0 0;letter-spacing:0.5px;">Route</div>
<div class="a" style="left:92px;top:110px;width:48px;height:21px;background:#f0f0f0;box-sizing:border-box;border-left:1px solid #fff;border-top:1px solid #fff;border-right:1px solid #696969;box-shadow:inset -1px 0 0 #a0a0a0"></div>
<div class="t s" style="left:99px;top:113px;font-size:12px;color:#000;transform:scaleX(0.8);transform-origin:0 0;letter-spacing:0.5px;">Design</div>
<div class="grp" style="left:54px;top:145px;width:615px;height:449px"></div>
<div class="a" style="left:60px;top:144px;width:106.5px;height:4px;background:#f0f0f0"></div>
<div class="t s" style="left:63.5px;top:141px;font-size:12px;color:#000;transform:scaleX(0.8);transform-origin:0 0;letter-spacing:0.5px;">Command parameters</div>
<div class="grp" style="left:82px;top:167px;width:272px;height:119px"></div>
<div class="a" style="left:88px;top:166px;width:22px;height:4px;background:#f0f0f0"></div>
<div class="t s" style="left:91.5px;top:163px;font-size:12px;color:#000;transform:scaleX(0.8);transform-origin:0 0;letter-spacing:0.5px;">Size</div>
<div class="t s" style="left:96px;top:193px;font-size:12px;color:#000;transform:scaleX(0.8);transform-origin:0 0;letter-spacing:0.5px;">User units:</div>
<div class="edit" style="left:187px;top:188px;width:86px;height:20px"></div>
<div class="btn" style="left:255px;top:190px;width:16px;height:16px"><div class="arr"></div></div>
<div class="t s" style="left:191px;top:193px;font-size:12px;color:#000;transform:scaleX(0.8);transform-origin:0 0;letter-spacing:0.5px;">Millimeter</div>
<div class="t s" style="left:96px;top:215px;font-size:12px;color:#000;transform:scaleX(0.8);transform-origin:0 0;letter-spacing:0.5px;">Size:</div>
<div class="edit" style="left:187px;top:210px;width:86px;height:20px"></div>
<div class="btn" style="left:255px;top:212px;width:16px;height:16px"><div class="arr"></div></div>
<div class="t s" style="left:191px;top:215px;font-size:12px;color:#000;transform:scaleX(0.8);transform-origin:0 0;letter-spacing:0.5px;">Other</div>
<div class="t s" style="left:96px;top:237px;font-size:12px;color:#000;transform:scaleX(0.8);transform-origin:0 0;letter-spacing:0.5px;">Accuracy:</div>
<div class="edit" style="left:187px;top:232px;width:23px;height:20px"></div>
<div class="t s" style="left:191px;top:237px;font-size:12px;color:#000;transform:scaleX(0.8);transform-origin:0 0;letter-spacing:0.5px;">4</div>
<div class="a" style="left:210px;top:232px;width:17px;height:20px;background:#f0f0f0;border-top:1px solid #a0a0a0;border-right:1px solid #fff;border-bottom:1px solid #fff;box-sizing:border-box"></div>
<div class="btn" style="left:210px;top:233px;width:16px;height:9px"></div>
<div class="btn" style="left:210px;top:242px;width:16px;height:9px"></div>
<svg class="a" style="left:210px;top:232px" width="17" height="20"><path d="M6.5 6 L8.5 4 L10.5 6 Z M6.5 14 L8.5 16 L10.5 14 Z" fill="#000"/></svg>
<div class="t s" style="left:243px;top:237px;font-size:12px;color:#000;transform:scaleX(0.8);transform-origin:0 0;letter-spacing:0.5px;">(decimal places)</div>
<div class="t s" style="left:96px;top:259px;font-size:12px;color:#000;transform:scaleX(0.8);transform-origin:0 0;letter-spacing:0.5px;">Long name size:</div>
<div class="edit" style="left:187px;top:255px;width:30px;height:20px"></div>
<div class="t s" style="left:191px;top:259px;font-size:12px;color:#000;transform:scaleX(0.8);transform-origin:0 0;letter-spacing:0.5px;">255</div>
<div class="grp" style="left:82px;top:310px;width:272px;height:86px"></div>
<div class="a" style="left:88px;top:309px;width:38px;height:4px;background:#f0f0f0"></div>
<div class="t s" style="left:91.5px;top:306px;font-size:12px;color:#000;transform:scaleX(0.8);transform-origin:0 0;letter-spacing:0.5px;">Extents</div>
<div class="t s" style="left:96px;top:336px;font-size:12px;color:#000;transform:scaleX(0.8);transform-origin:0 0;letter-spacing:0.5px;">Left X:</div>
<div class="edit" style="left:132px;top:332px;width:78px;height:19px"></div>
<div class="t s" style="left:135px;top:336px;font-size:12px;color:#000;transform:scaleX(0.8);transform-origin:0 0;letter-spacing:0.5px;">-63.5000</div>
<div class="t s" style="left:215px;top:336px;font-size:12px;color:#000;transform:scaleX(0.8);transform-origin:0 0;letter-spacing:0.5px;">Lower Y:</div>
<div class="edit" style="left:265px;top:332px;width:78px;height:19px"></div>
<div class="t s" style="left:268px;top:336px;font-size:12px;color:#000;transform:scaleX(0.8);transform-origin:0 0;letter-spacing:0.5px;">-50.8000</div>
<div class="t s" style="left:96px;top:358px;font-size:12px;color:#000;transform:scaleX(0.8);transform-origin:0 0;letter-spacing:0.5px;">Width:</div>
<div class="edit" style="left:132px;top:354px;width:78px;height:19px"></div>
<div class="t s" style="left:135px;top:358px;font-size:12px;color:#000;transform:scaleX(0.8);transform-origin:0 0;letter-spacing:0.5px;">165.1000</div>
<div class="t s" style="left:215px;top:358px;font-size:12px;color:#000;transform:scaleX(0.8);transform-origin:0 0;letter-spacing:0.5px;">Height:</div>
<div class="edit" style="left:265px;top:354px;width:78px;height:19px"></div>
<div class="t s" style="left:268px;top:358px;font-size:12px;color:#000;transform:scaleX(0.8);transform-origin:0 0;letter-spacing:0.5px;">127.0000</div>
<div class="grp" style="left:82px;top:420px;width:272px;height:64px"></div>
<div class="a" style="left:88px;top:419px;width:57px;height:4px;background:#f0f0f0"></div>
<div class="t s" style="left:91.5px;top:416px;font-size:12px;color:#000;transform:scaleX(0.8);transform-origin:0 0;letter-spacing:0.5px;">Move origin</div>
<div class="t s" style="left:95px;top:446px;font-size:12px;color:#000;transform:scaleX(0.8);transform-origin:0 0;letter-spacing:0.5px;">X:</div>
<div class="edit" style="left:132px;top:442px;width:78px;height:19px"></div>
<div class="t s" style="left:135px;top:446px;font-size:12px;color:#000;transform:scaleX(0.8);transform-origin:0 0;letter-spacing:0.5px;">0.0000</div>
<div class="t s" style="left:245px;top:446px;font-size:12px;color:#000;transform:scaleX(0.8);transform-origin:0 0;letter-spacing:0.5px;">Y:</div>
<div class="edit" style="left:265px;top:442px;width:78px;height:19px"></div>
<div class="t s" style="left:268px;top:446px;font-size:12px;color:#000;transform:scaleX(0.8);transform-origin:0 0;letter-spacing:0.5px;">0.0000</div>
<div class="grp" style="left:82px;top:508px;width:272px;height:64px"></div>
<div class="a" style="left:88px;top:507px;width:66px;height:4px;background:#f0f0f0"></div>
<div class="t s" style="left:91.5px;top:504px;font-size:12px;color:#000;transform:scaleX(0.8);transform-origin:0 0;letter-spacing:0.5px;">Drawing type</div>
<div class="t s" style="left:97px;top:534px;font-size:12px;color:#000;transform:scaleX(0.8);transform-origin:0 0;letter-spacing:0.5px;">Type:</div>
<div class="edit" style="left:138px;top:529px;width:100px;height:20px"></div>
<div class="btn" style="left:220px;top:531px;width:16px;height:16px"><div class="arr"></div></div>
<div class="t s" style="left:142px;top:534px;font-size:12px;color:#000;transform:scaleX(0.8);transform-origin:0 0;letter-spacing:0.5px;">Package</div>
<div class="t s" style="left:244px;top:534px;font-size:12px;color:#000;transform:scaleX(0.8);transform-origin:0 0;letter-spacing:0.5px;">symbol</div>
<div class="chk" style="left:292px;top:532px"></div>
<div class="t s" style="left:310px;top:532px;font-size:12px;color:#000;transform:scaleX(0.8);transform-origin:0 0;letter-spacing:0.5px;">Jumper</div>
<div class="grp" style="left:376px;top:167px;width:265px;height:163px"></div>
<div class="a" style="left:382px;top:166px;width:46px;height:4px;background:#f0f0f0"></div>
<div class="t s" style="left:385.5px;top:163px;font-size:12px;color:#000;transform:scaleX(0.8);transform-origin:0 0;letter-spacing:0.5px;">Line lock</div>
<div class="t s" style="left:391px;top:193px;font-size:12px;color:#000;transform:scaleX(0.8);transform-origin:0 0;letter-spacing:0.5px;">Lock direction:</div>
<div class="edit" style="left:516px;top:188px;width:44px;height:20px"></div>
<div class="btn" style="left:542px;top:190px;width:16px;height:16px"><div class="arr"></div></div>
<div class="t s" style="left:520px;top:193px;font-size:12px;color:#000;transform:scaleX(0.8);transform-origin:0 0;letter-spacing:0.5px;">90</div>
<div class="t s" style="left:391px;top:215px;font-size:12px;color:#000;transform:scaleX(0.8);transform-origin:0 0;letter-spacing:0.5px;">Lock mode:</div>
<div class="edit" style="left:516px;top:210px;width:44px;height:20px"></div>
<div class="btn" style="left:542px;top:212px;width:16px;height:16px"><div class="arr"></div></div>
<div class="t s" style="left:520px;top:215px;font-size:12px;color:#000;transform:scaleX(0.8);transform-origin:0 0;letter-spacing:0.5px;">Line</div>
<div class="t s" style="left:391px;top:237px;font-size:12px;color:#000;transform:scaleX(0.8);transform-origin:0 0;letter-spacing:0.5px;">Minimum radius:</div>
<div class="edit" style="left:517px;top:233px;width:71px;height:19px"></div>
<div class="t s" style="left:520px;top:237px;font-size:12px;color:#000;transform:scaleX(0.8);transform-origin:0 0;letter-spacing:0.5px;">0.0000</div>
<div class="chk" style="left:390px;top:257px"></div>
<div class="t s" style="left:409px;top:257px;font-size:12px;color:#000;transform:scaleX(0.8);transform-origin:0 0;letter-spacing:0.5px;">Fixed 45 Length:</div>
<div class="edit" style="left:517px;top:255px;width:71px;height:19px"></div>
<div class="t s" style="left:520px;top:259px;font-size:12px;color:#000;transform:scaleX(0.8);transform-origin:0 0;letter-spacing:0.5px;">0.6350</div>
<div class="chk" style="left:390px;top:279px"></div>
<div class="t s" style="left:409px;top:279px;font-size:12px;color:#000;transform:scaleX(0.8);transform-origin:0 0;letter-spacing:0.5px;">Fixed radius:</div>
<div class="edit" style="left:517px;top:277px;width:71px;height:19px"></div>
<div class="t s" style="left:520px;top:281px;font-size:12px;color:#000;transform:scaleX(0.8);transform-origin:0 0;letter-spacing:0.5px;">0.0025</div>
<div class="chk" style="left:390px;top:301px"><svg width="13" height="13" style="position:absolute;left:0;top:0"><path d="M2.5 5.5 L4.8 8 L10 2.8" stroke="#000" stroke-width="2" fill="none"/></svg></div>
<div class="t s" style="left:409px;top:301px;font-size:12px;color:#000;transform:scaleX(0.8);transform-origin:0 0;letter-spacing:0.5px;">Tangent</div>
<div class="grp" style="left:376px;top:354px;width:265px;height:97px"></div>
<div class="a" style="left:382px;top:353px;width:37px;height:4px;background:#f0f0f0"></div>
<div class="t s" style="left:385.5px;top:350px;font-size:12px;color:#000;transform:scaleX(0.8);transform-origin:0 0;letter-spacing:0.5px;">Symbol</div>
<div class="t s" style="left:390px;top:379px;font-size:12px;color:#000;transform:scaleX(0.8);transform-origin:0 0;letter-spacing:0.5px;">Angle:</div>
<div class="edit" style="left:432px;top:375px;width:74px;height:20px"></div>
<div class="btn" style="left:488px;top:377px;width:16px;height:16px"><div class="arr"></div></div>
<div class="t s" style="left:436px;top:380px;font-size:12px;color:#000;transform:scaleX(0.8);transform-origin:0 0;letter-spacing:0.5px;">0.000</div>
<div class="chk" style="left:523px;top:378px"></div>
<div class="t s" style="left:541px;top:378px;font-size:12px;color:#000;transform:scaleX(0.8);transform-origin:0 0;letter-spacing:0.5px;">Mirror</div>
<div class="t s" style="left:391px;top:413px;font-size:12px;color:#000;transform:scaleX(0.8);transform-origin:0 0;letter-spacing:0.5px;">Default symbol height:</div>
<div class="edit" style="left:524px;top:409px;width:56px;height:20px"></div>
<div class="t s" style="left:527px;top:413px;font-size:12px;color:#000;transform:scaleX(0.8);transform-origin:0 0;letter-spacing:0.5px;">3.8100</div>
<div class="grp" style="left:54px;top:607px;width:615px;height:113px"></div>
<div class="a" style="left:60px;top:606px;width:105px;height:4px;background:#f0f0f0"></div>
<div class="t s" style="left:63.5px;top:603px;font-size:12px;color:#000;transform:scaleX(0.8);transform-origin:0 0;letter-spacing:0.5px;">Parameter description</div>
<div class="t s" style="left:62px;top:619px;font-size:12px;color:#000;transform:scaleX(0.808);transform-origin:0 0;letter-spacing:0.5px;">Specifies the radius, in user-defined units, of arcs. By default, this is unchecked. If checked, the default is 25.</div>
<svg class="a" style="left:0;top:0" width="830" height="700">
<ellipse cx="205" cy="273" rx="30" ry="31.5" fill="none" stroke="#f020f0" stroke-width="3"/>
<polygon points="228,296.5 250,307.5 247.5,310.5 387.5,501 237.7,317.7 233.5,320" fill="#f020f0"/>
<polygon points="314,257 324,262 314,267" fill="#f020f0"/>
</svg>
</body></html>
